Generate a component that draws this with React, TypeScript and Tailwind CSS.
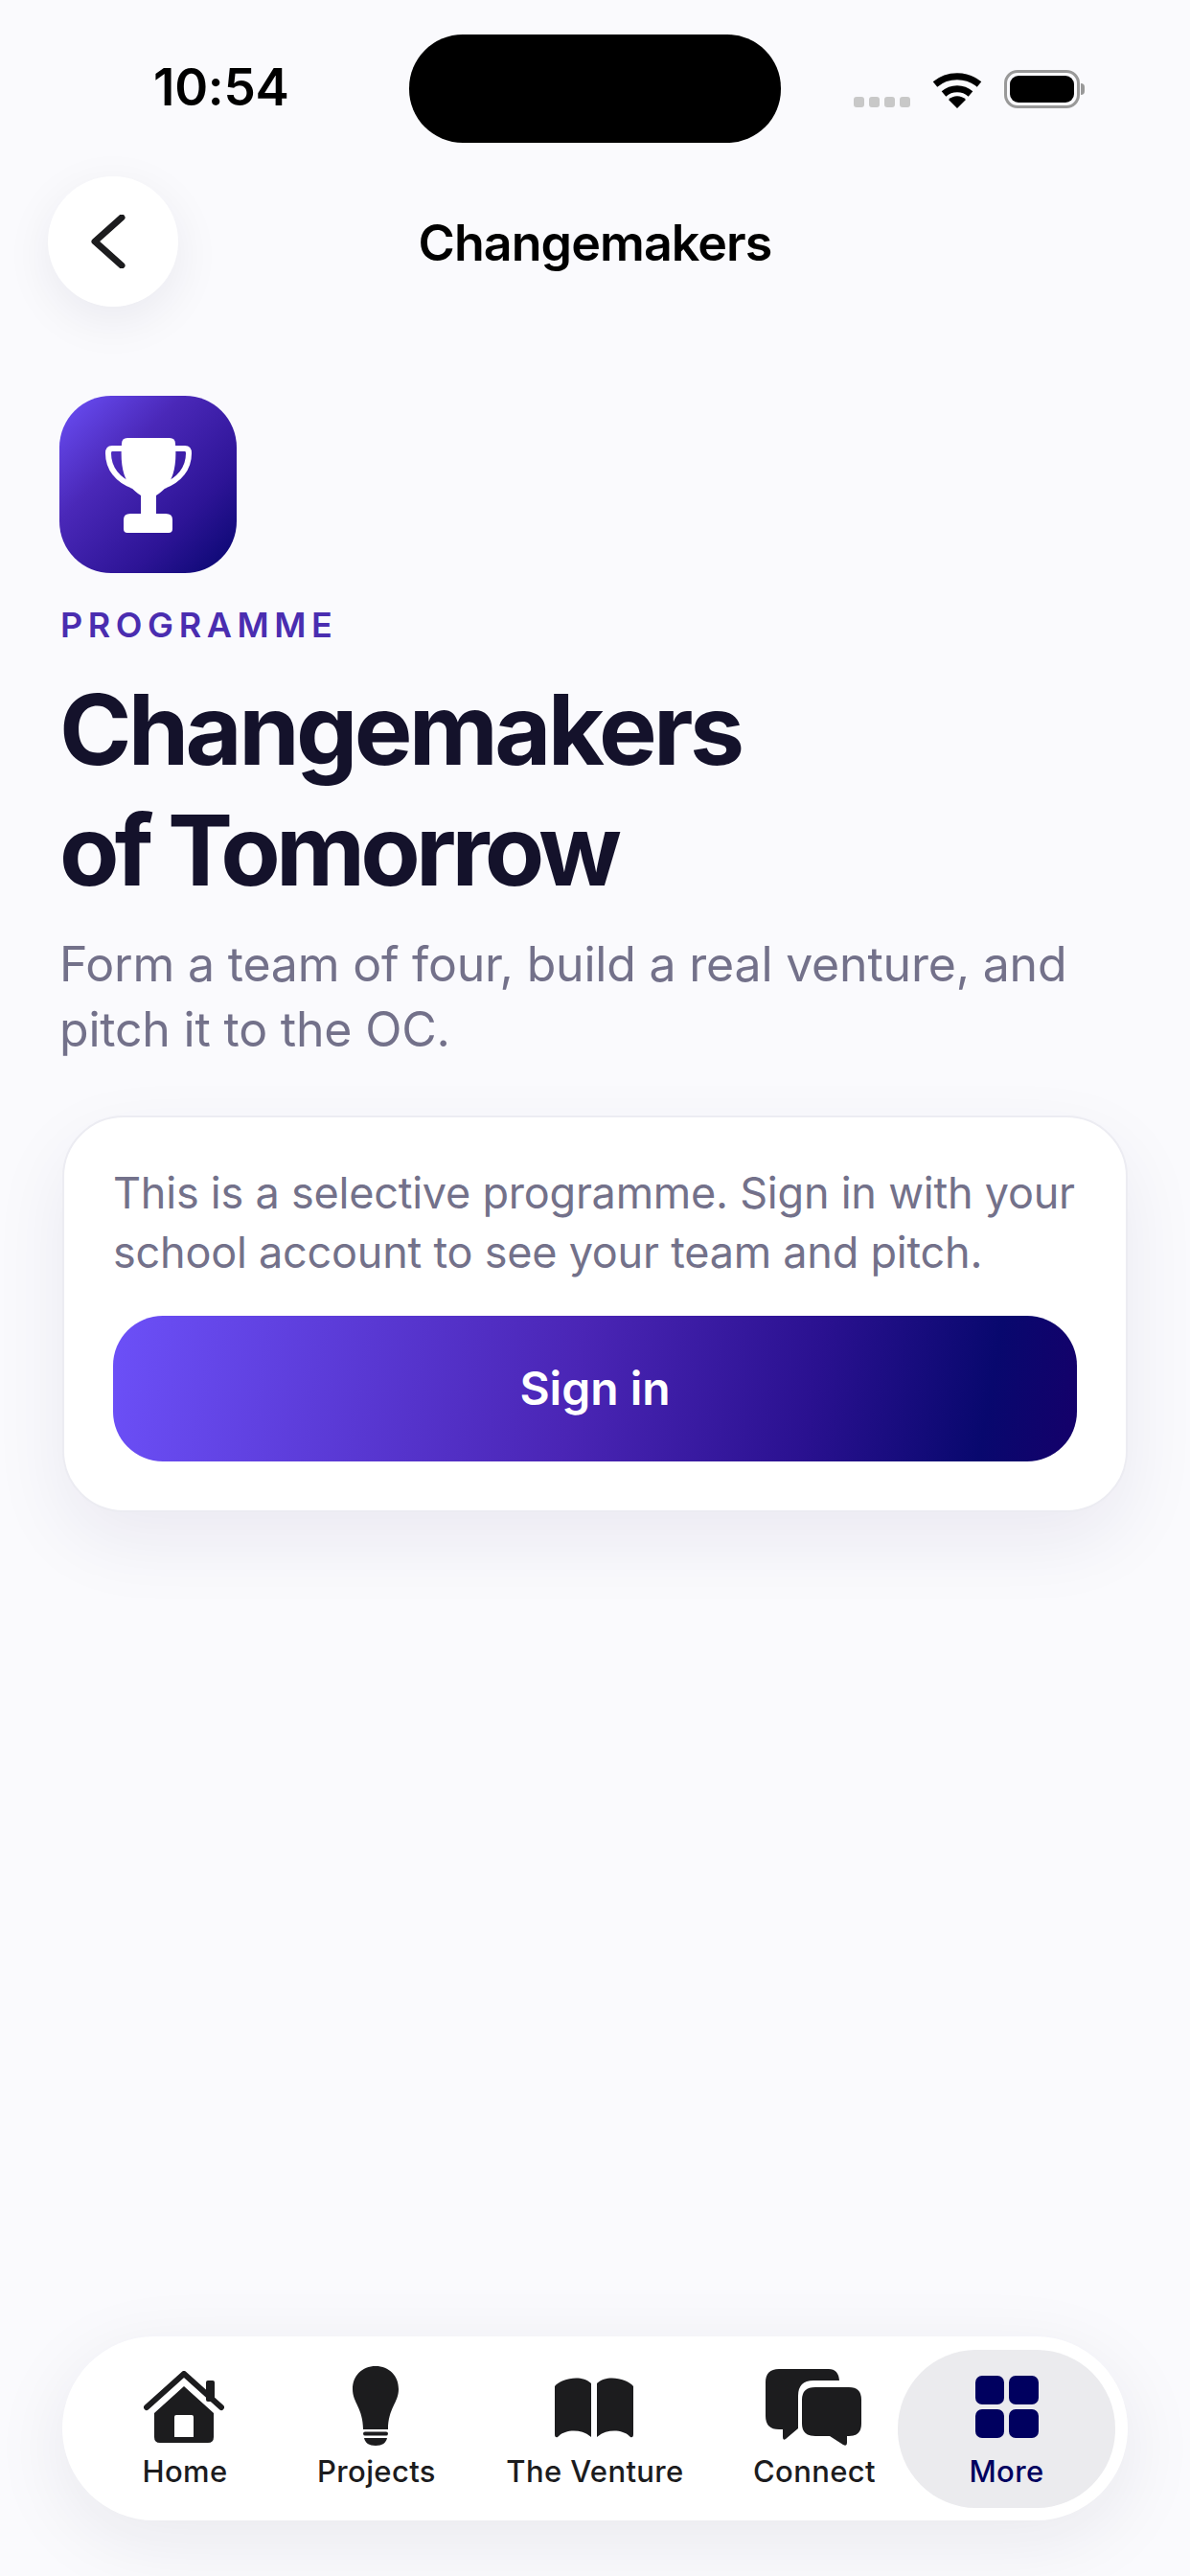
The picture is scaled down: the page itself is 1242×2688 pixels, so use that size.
import React from "react";

const Trophy = () => (
  <svg width="92" height="100" viewBox="0 0 92 100" fill="none" className="mt-[2px]">
    <path d="M24 0H68Q74 0 74 6C76 35 70 50 54 60V79H64Q71 79 71 85V95Q71 99 67 99H24Q20 99 20 95V85Q20 79 27 79H38V60C22 50 16 35 18 6Q18 0 24 0Z" fill="#fff" />
    <path d="M20 11H8Q4 11 4 16C4 32 14 44 30 50M72 11H84Q88 11 88 16C88 32 78 44 62 50" stroke="#fff" strokeWidth="6" strokeLinecap="round" />
  </svg>
);

const HomeIcon = () => (
  <svg width="84" height="76" viewBox="0 0 84 76" fill="none" className="mb-[4px]">
    <path d="M3 38L42 3L81 38" stroke="#1c1c1e" strokeWidth="6" strokeLinecap="round" strokeLinejoin="round" />
    <rect x="65" y="10" width="9" height="22" rx="2" fill="#1c1c1e" />
    <path fillRule="evenodd" clipRule="evenodd" d="M42 16L73 44V69Q73 75 67 75H17Q11 75 11 69V44ZM32 48V69H52V48Q52 46 50 46H34Q32 46 32 48Z" fill="#1c1c1e" />
  </svg>
);

const BulbIcon = () => (
  <svg width="48" height="84" viewBox="0 0 48 84" fill="none" className="mb-[1px]">
    <path d="M24 0C38 0 48 10 48 24C48 38 37 44 37 66H11C11 44 0 38 0 24C0 10 10 0 24 0Z" fill="#1c1c1e" />
    <rect x="11" y="68.5" width="26" height="4" rx="2" fill="#1c1c1e" />
    <path d="M12 75H36C35 80 31 83 24 83C17 83 13 80 12 75Z" fill="#1c1c1e" />
  </svg>
);

const BookIcon = () => (
  <svg width="82" height="65" viewBox="0 0 82 65" fill="none" className="mb-[9px]">
    <path d="M0 10C6 2 28 -3 38 7V63C28 54 10 55 3 63Q0 64 0 60Z" fill="#1c1c1e" />
    <path d="M82 10C76 2 54 -3 44 7V63C54 54 72 55 79 63Q82 64 82 60Z" fill="#1c1c1e" />
  </svg>
);

const ChatIcon = () => (
  <svg width="100" height="80" viewBox="0 0 100 80" fill="none" className="mb-[2px]">
    <path d="M14 0H66Q76 0 77 12H50Q34 12 34 28V62L21 73Q18 75 18 71V63H14Q0 63 0 49V14Q0 0 14 0Z" fill="#1c1c1e" />
    <path d="M52 19H87Q100 19 100 32V57Q100 70 87 70H85V77Q85 81 81 79L67 70H52Q38 70 38 57V32Q38 19 52 19Z" fill="#1c1c1e" />
  </svg>
);

const GridIcon = () => (
  <svg width="66" height="66" viewBox="0 0 66 66" fill="#00005f" className="mb-[9px]">
    <rect x="0" y="0" width="30" height="30" rx="7" />
    <rect x="35" y="0" width="31" height="30" rx="7" />
    <rect x="0" y="35" width="30" height="30" rx="7" />
    <rect x="35" y="35" width="31" height="30" rx="7" />
  </svg>
);

const Wifi = () => (
  <svg width="52" height="38" viewBox="0 0 52 38" fill="none">
    <path d="M3 13C16 2 36 2 49 13" stroke="#000" strokeWidth="7" strokeLinecap="butt" />
    <path d="M12 23C20 16 32 16 40 23" stroke="#000" strokeWidth="7" strokeLinecap="butt" />
    <path d="M17 29C22 24 30 24 35 29L26 38Z" fill="#000" />
  </svg>
);

const Tab = ({ icon, label, className }: { icon: React.ReactNode; label: string; className: string }) => (
  <div className={`flex flex-col items-center justify-end h-[165px] pb-[19px] ${className}`}>
    <div className="h-[84px] flex items-end justify-center">{icon}</div>
    <span className="mt-[6px] ml-[2px] text-[31px] leading-[38px] font-medium text-[#1c1c1e] tracking-[0.012em]">{label}</span>
  </div>
);

export default function App() {
  return (
    <div className="w-[1242px] h-[2688px] bg-[#fafafd] flex flex-col overflow-hidden font-['Inter',sans-serif]">
      <div className="flex h-[184px] pt-[36px] items-start">
        <div className="w-[427px] pl-[160px] pt-[25px] text-[53px] leading-[60px] font-semibold text-black tracking-[-0.005em]">10:54</div>
        <div className="w-[388px] h-[113px] bg-black rounded-[56px]" />
        <div className="flex items-end pl-[76px] pt-[37px] h-[77px]">
          <div className="flex gap-[5px] mb-[1px]">
            <span className="w-[11px] h-[11px] rounded-[3px] bg-[#c8c8c8]" />
            <span className="w-[11px] h-[11px] rounded-[3px] bg-[#c8c8c8]" />
            <span className="w-[11px] h-[11px] rounded-[3px] bg-[#c8c8c8]" />
            <span className="w-[11px] h-[11px] rounded-[3px] bg-[#c8c8c8]" />
          </div>
          <div className="ml-[23px]"><Wifi /></div>
          <div className="ml-[23px] flex items-center">
            <div className="w-[79px] h-[40px] rounded-[14px] border-[3px] border-[#999] p-[3px]">
              <div className="w-full h-full rounded-[9px] bg-black" />
            </div>
            <div className="w-[4px] h-[12px] bg-[#999] rounded-r-[4px] ml-[1px]" />
          </div>
        </div>
      </div>

      <div className="relative h-[136px] flex items-center justify-center">
        <div className="absolute left-[50px] top-0 w-[136px] h-[136px] rounded-full bg-white shadow-[0_14px_50px_rgba(20,20,50,0.07)] flex items-center justify-center">
          <svg width="38" height="56" viewBox="0 0 38 56" fill="none" className="mr-[10px]">
            <path d="M33 3L5 28L33 53" stroke="#1c1c1e" strokeWidth="7" strokeLinecap="round" strokeLinejoin="round" />
          </svg>
        </div>
        <span className="text-[52px] leading-[60px] font-semibold text-black tracking-[-0.018em] mt-[3px]">Changemakers</span>
      </div>

      <div className="px-[62px] pt-[93px]">
        <div className="w-[185px] h-[185px] rounded-[54px] bg-[linear-gradient(135deg,#6c50f8_0%,#4a28b8_35%,#2d1496_70%,#06066e_100%)] flex items-center justify-center">
          <Trophy />
        </div>
        <div className="mt-[32px] ml-[1px] text-[36px] leading-[44px] font-semibold tracking-[0.155em] text-[#4a2db0]">PROGRAMME</div>
        <h1 className="mt-[24px] text-[102px] leading-[126px] font-bold text-[#14122b]">
          <span className="tracking-[-0.036em]">Changemakers</span>
          <br />
          <span className="tracking-[-0.047em]">of Tomorrow</span>
        </h1>
        <p className="mt-[22px] text-[50px] leading-[68px] text-[#73718a] tracking-[-0.004em] whitespace-nowrap">
          Form a team of four, build a real venture, and<br />pitch it to the OC.
        </p>
      </div>

      <div className="mx-[65px] mt-[56px] h-[414px] rounded-[64px] bg-white border-[2px] border-[#ececf2] shadow-[0_30px_80px_rgba(30,20,80,0.07)] px-[51px] pt-[48px]">
        <p className="text-[45px] leading-[62px] text-[#73718a] tracking-[-0.005em] whitespace-nowrap">
          This is a selective programme. Sign in with your<br />school account to see your team and pitch.
        </p>
        <div className="mt-[35px] h-[152px] rounded-[52px] bg-[linear-gradient(100deg,#6c50f8_0%,#4a25b5_48%,#2a1190_72%,#08086e_90%,#15006a_100%)] flex items-center justify-center text-[48px] font-semibold text-white">
          Sign in
        </div>
      </div>

      <div className="mt-auto mb-[58px] mx-[65px] h-[192px] rounded-[96px] bg-white shadow-[0_20px_80px_rgba(20,20,50,0.08)] flex items-center pl-[12px]">
        <Tab icon={<HomeIcon />} label="Home" className="w-[230px]" />
        <Tab icon={<BulbIcon />} label="Projects" className="w-[170px]" />
        <Tab icon={<BookIcon />} label="The Venture" className="w-[286px]" />
        <Tab icon={<ChatIcon />} label="Connect" className="w-[172px]" />
        <div className="ml-[2px] w-[227px] h-[165px] rounded-[82px] bg-[#ebebee] flex flex-col items-center justify-end pb-[19px]">
          <div className="h-[84px] flex items-end justify-center"><GridIcon /></div>
          <span className="mt-[6px] text-[31px] leading-[38px] font-medium tracking-[0.012em] text-[#00005f]">More</span>
        </div>
      </div>
    </div>
  );
}
